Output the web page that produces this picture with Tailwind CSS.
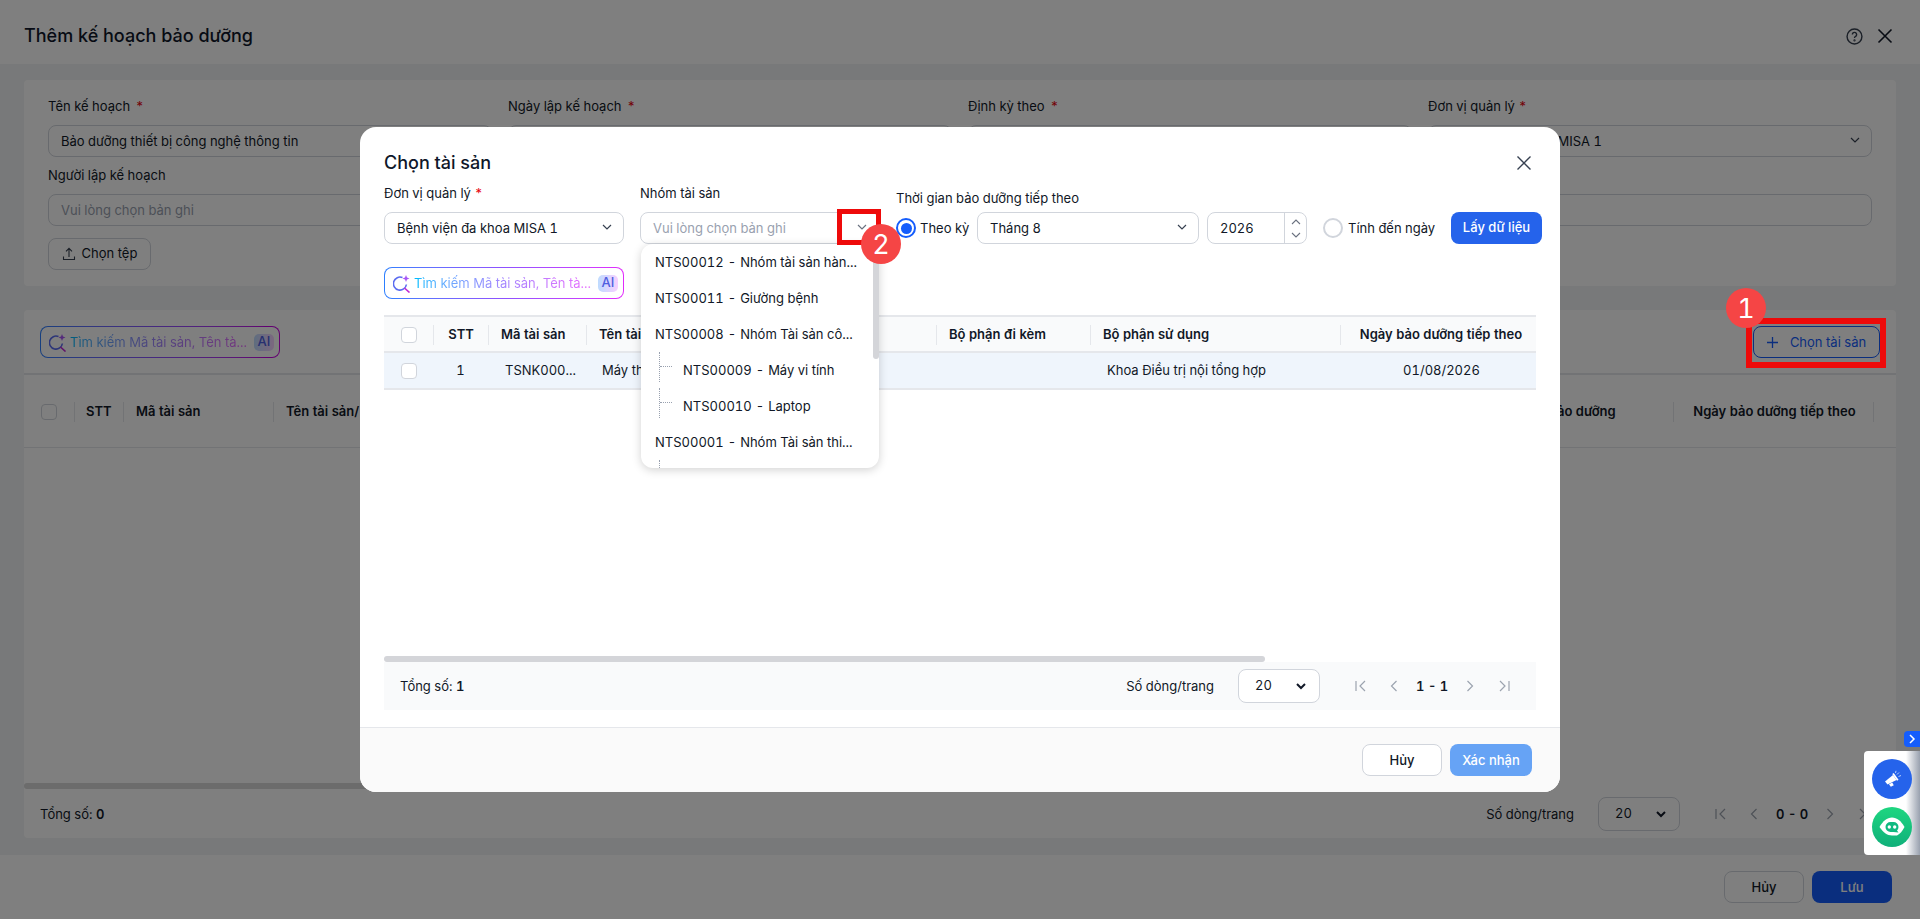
<!DOCTYPE html>
<html lang="vi">
<head>
    <meta charset="UTF-8">
    <meta name="viewport" content="width=device-width, initial-scale=1.0">
    <title>Thêm kế hoạch bảo dưỡng</title>
    <script src="https://cdn.jsdelivr.net/npm/@tailwindcss/browser@4"></script>
</head>
<body class="relative h-[919px] w-[1920px] overflow-hidden bg-[#f0f2f4] font-[Inter,sans-serif] text-[13px] tabular-nums text-[#111827]">

    <!-- page behind the dialog -->
    <div class="flex h-full flex-col">
        <header class="flex h-16 items-center justify-between bg-white pl-6 pr-[27px] pt-2">
            <h1 class="text-lg font-medium text-[#0f172a]">Thêm kế hoạch bảo dưỡng</h1>
            <div class="flex items-center gap-[14px]">
                <svg class="h-[17px] w-[17px]" viewBox="0 0 24 24" fill="none" stroke="#374151" stroke-width="2"><circle cx="12" cy="12" r="10.5"/><path d="M9 9.2a3 3 0 1 1 4.6 2.5c-1 .7-1.600 1.300-1.600 2.500"/><circle cx="12" cy="17.6" r=".6"/></svg>
                <svg class="h-4 w-4" viewBox="0 0 16 16" fill="none" stroke="#111827" stroke-width="1.6"><path d="M1.500 1.500l13 13M14.500 1.500l-13 13"/></svg>
            </div>
        </header>

        <main class="flex flex-1 flex-col gap-6 pb-[17px] pl-6 pr-6 pt-4">
            <section class="rounded bg-white px-6 pb-4 pt-[17px]">
                <div class="grid grid-cols-4 gap-x-4">
                    <div>
                        <label class="mb-2 block h-5 leading-[18px]">Tên kế hoạch <span class="ml-[2px] text-red-600">*</span></label>
                        <div class="flex h-8 items-center rounded-lg border border-gray-300 px-3 pt-[2px]">Bảo dưỡng thiết bị công nghệ thông tin</div>
                    </div>
                    <div>
                        <label class="mb-2 block h-5 leading-[18px]">Ngày lập kế hoạch <span class="ml-[2px] text-red-600">*</span></label>
                        <div class="flex h-8 items-center rounded-lg border border-gray-300 px-3"></div>
                    </div>
                    <div>
                        <label class="mb-2 block h-5 leading-[18px]">Định kỳ theo <span class="ml-[2px] text-red-600">*</span></label>
                        <div class="flex h-8 items-center rounded-lg border border-gray-300 px-3"></div>
                    </div>
                    <div>
                        <label class="mb-2 block h-5 leading-[18px]">Đơn vị quản lý <span class="text-red-600">*</span></label>
                        <div class="flex h-8 items-center justify-between rounded-lg border border-gray-300 pl-3 pr-[10px] pt-[2px]">
                            Bệnh viện đa khoa MISA 1
                            <svg class="-mt-1 h-3 w-3" viewBox="0 0 12 12" fill="none" stroke="#374151" stroke-width="1.2"><path d="M2 4l4 4 4-4"/></svg>
                        </div>
                    </div>
                </div>
                <div class="mt-[9px] grid grid-cols-4 gap-x-4">
                    <div>
                        <label class="mb-2 block h-5 leading-[18px]">Người lập kế hoạch</label>
                        <div class="flex h-8 items-center rounded-lg border border-gray-300 px-3 pt-[2px] text-gray-400">Vui lòng chọn bản ghi</div>
                    </div>
                    <div></div>
                    <div></div>
                    <div class="flex flex-col justify-end">
                        <div class="h-8 rounded-lg border border-gray-300"></div>
                    </div>
                </div>
                <button class="mt-3 flex h-8 w-[103px] items-center justify-center gap-[6px] rounded-lg border border-gray-300">
                    <svg class="h-[14px] w-[14px]" viewBox="0 0 14 14" fill="none" stroke="#374151" stroke-width="1.1"><path d="M7 10V1.500M4 4.300L7 1.300l3 3M1.500 9.500v3h11v-3"/></svg>
                    Chọn tệp
                </button>
            </section>

            <section class="flex flex-1 flex-col rounded bg-white">
                <div class="flex h-[65px] items-start justify-between border-b-2 border-gray-200 px-4 pt-4">
                    <div class="h-8 w-[240px] rounded-lg bg-gradient-to-r from-blue-500 via-violet-500 to-fuchsia-600 p-px">
                        <div class="flex h-full items-center rounded-[7px] bg-white pl-2 pr-[5px]">
                            <svg class="h-[19px] w-[19px] shrink-0" viewBox="0 0 19 19" fill="none" stroke-width="1.6"><path d="M9.500 3.600A6.500 6.500 0 1 0 13.400 10.500" stroke="#5b6cf0"/><path d="M11.500 14l5 4.500" stroke="#c026d3"/><path d="M13 1l1 2.500 2.500 1-2.500 1-1 2.500-1-2.500-2.500-1 2.500-1z" fill="#a855f7" stroke="none"/></svg>
                            <span class="ml-[2px] flex-1 truncate bg-gradient-to-r from-sky-400 via-violet-400 to-fuchsia-400 bg-clip-text pt-[2px] text-transparent">Tìm kiếm Mã tài sản, Tên tà...</span>
                            <span class="flex h-[17px] w-5 items-center justify-center rounded-[5px] bg-gradient-to-r from-blue-200 to-fuchsia-200 font-medium text-[#4f5fe0]">AI</span>
                        </div>
                    </div>
                    <button class="flex h-8 w-[127px] items-center justify-center gap-3 rounded-lg border border-blue-600 text-blue-600">
                        <svg class="h-[11px] w-[11px]" viewBox="0 0 11 11" fill="none" stroke="currentColor" stroke-width="1.3"><path d="M5.500 0v11M0 5.500h11"/></svg>
                        <span class="pt-[2px]">Chọn tài sản</span>
                    </button>
                </div>
                <div class="grid h-[73px] grid-cols-[50px_49px_150px_1fr_218px_200px_23px] items-center border-b border-gray-200 pt-[2px] font-semibold">
                    <div class="flex justify-end pr-[17px]"><span class="h-4 w-4 rounded border border-gray-300"></span></div>
                    <div class="flex h-5 items-center border-l border-gray-200 pl-[11px]">STT</div>
                    <div class="flex h-5 items-center border-l border-gray-200 pl-3">Mã tài sản</div>
                    <div class="flex h-5 items-center border-l border-gray-200 pl-3">Tên tài sản/</div>
                    <div class="flex h-5 items-center justify-center">Ngày bảo dưỡng</div>
                    <div class="flex h-5 items-center justify-center border-l border-gray-200 pl-[2px]">Ngày bảo dưỡng tiếp theo</div>
                    <div class="h-5 border-l border-gray-200"></div>
                </div>
                <div class="flex-1"></div>
                <div class="h-1.5 w-[1200px] rounded-full bg-[#d8d8d8]"></div>
                <div class="flex h-[49px] items-center justify-between pl-4">
                    <div class="pt-[2px]">Tổng số: <b class="font-semibold">0</b></div>
                    <div class="flex items-center">
                        <span class="pt-[2px]">Số dòng/trang</span>
                        <div class="ml-[24px] flex h-[34px] w-[82px] items-center justify-between rounded-lg border border-gray-300 pl-4 pr-3">
                            20
                            <svg class="h-3 w-3" viewBox="0 0 12 12" fill="none" stroke="#111827" stroke-width="2"><path d="M2 4l4 4 4-4"/></svg>
                        </div>
                        <svg class="ml-[33px] h-4 w-4" viewBox="0 0 16 16" fill="none" stroke="#9ca3af" stroke-width="1.2"><path d="M3 3v10M12 3L7 8l5 5"/></svg>
                        <svg class="ml-[17px] h-4 w-4" viewBox="0 0 16 16" fill="none" stroke="#9ca3af" stroke-width="1.2"><path d="M10.500 3L5.500 8l5 5"/></svg>
                        <span class="ml-[14px] w-[32px] whitespace-nowrap pt-[2px] text-center font-semibold">0 - 0</span>
                        <svg class="ml-[14px] h-4 w-4" viewBox="0 0 16 16" fill="none" stroke="#9ca3af" stroke-width="1.2"><path d="M5.500 3l5 5-5 5"/></svg>
                        <svg class="ml-[18px] mr-[24px] h-4 w-4" viewBox="0 0 16 16" fill="none" stroke="#9ca3af" stroke-width="1.2"><path d="M13 3v10M4 3l5 5-5 5"/></svg>
                    </div>
                </div>
            </section>
        </main>

        <footer class="flex h-16 items-start justify-end gap-2 bg-white pr-7 pt-4">
            <button class="h-8 w-20 rounded-lg border border-gray-300 pt-[2px] font-medium">Hủy</button>
            <button class="h-8 w-20 rounded-lg bg-blue-600 pt-[2px] font-medium text-white">Lưu</button>
        </footer>
    </div>

    <!-- overlay -->
    <div class="absolute inset-0 bg-black/50"></div>

    <!-- annotations on the page -->
    <div class="absolute left-[1746px] top-[318px] h-[50px] w-[140px] border-[6px] border-[#ee0a0a]"></div>
    <div class="absolute left-[1726px] top-[288px] flex h-10 w-10 items-center justify-center rounded-full bg-[#f54545] text-[27px] leading-none text-white">1</div>

    <!-- dialog -->
    <div class="absolute left-[360px] top-[127px] flex h-[665px] w-[1200px] flex-col overflow-hidden rounded-2xl bg-white">
        <div class="flex flex-1 flex-col px-6 pb-[17px] pt-6">
            <div class="flex h-6 items-center justify-between">
                <h2 class="text-lg font-medium leading-6 text-[#0f172a]">Chọn tài sản</h2>
                <svg class="mr-[4px] h-4 w-4" viewBox="0 0 16 16" fill="none" stroke="#374151" stroke-width="1.4"><path d="M1.500 1.500l13 13M14.500 1.500l-13 13"/></svg>
            </div>

            <div class="mt-2 flex items-end">
                <div class="w-[240px] shrink-0">
                    <label class="mb-[9px] block h-5 leading-5">Đơn vị quản lý <span class="text-red-600">*</span></label>
                    <div class="flex h-8 items-center justify-between rounded-lg border border-gray-300 pl-3 pr-[10px] pt-[2px]">
                        Bệnh viện đa khoa MISA 1
                        <svg class="-mt-1 h-3 w-3" viewBox="0 0 12 12" fill="none" stroke="#374151" stroke-width="1.2"><path d="M2 4l4 4 4-4"/></svg>
                    </div>
                </div>
                <div class="ml-4 w-[239px] shrink-0">
                    <label class="mb-[9px] block h-5 leading-5">Nhóm tài sản</label>
                    <div class="flex h-8 items-center justify-between rounded-lg border border-gray-300 pl-3 pr-[10px] pt-[2px] text-gray-400">
                        Vui lòng chọn bản ghi
                        <svg class="-mt-1 h-3 w-3" viewBox="0 0 12 12" fill="none" stroke="#6b7280" stroke-width="1.2"><path d="M2 4l4 4 4-4"/></svg>
                    </div>
                </div>
                <div class="ml-[17px] shrink-0">
                    <label class="mb-1 block h-5 leading-5">Thời gian bảo dưỡng tiếp theo</label>
                    <div class="flex h-8 items-center">
                        <span class="flex h-5 w-5 items-center justify-center rounded-full border-2 border-blue-600"><span class="h-[11px] w-[11px] rounded-full bg-blue-600"></span></span>
                        <span class="ml-[4px] w-[57px] pt-[2px]">Theo kỳ</span>
                        <div class="flex h-8 w-[222px] items-center justify-between rounded-lg border border-gray-300 pl-3 pr-[10px] pt-[2px]">
                            Tháng 8
                            <svg class="-mt-1 h-3 w-3" viewBox="0 0 12 12" fill="none" stroke="#374151" stroke-width="1.2"><path d="M2 4l4 4 4-4"/></svg>
                        </div>
                        <div class="ml-2 flex h-8 w-[100px] items-center justify-between rounded-lg border border-gray-300 pl-3">
                            <span class="pt-[2px]">2026</span>
                            <div class="flex h-[30px] w-[22px] flex-col items-center justify-center gap-[5px] border-l border-gray-300">
                                <svg class="h-2 w-3" viewBox="0 0 12 8" fill="none" stroke="#6b7280" stroke-width="1.1"><path d="M2 6l4-4 4 4"/></svg>
                                <svg class="h-2 w-3" viewBox="0 0 12 8" fill="none" stroke="#6b7280" stroke-width="1.1"><path d="M2 2l4 4 4-4"/></svg>
                            </div>
                        </div>
                        <span class="ml-4 h-5 w-5 rounded-full border-2 border-gray-300"></span>
                        <span class="ml-[5px] w-[103px] pt-[2px]">Tính đến ngày</span>
                        <button class="h-8 w-[91px] rounded-lg bg-[#2563eb] font-medium text-white">Lấy dữ liệu</button>
                    </div>
                </div>
            </div>

            <div class="mt-[23px] h-8 w-[240px] rounded-lg bg-gradient-to-r from-blue-500 via-violet-500 to-fuchsia-500 p-px">
                <div class="flex h-full items-center rounded-[7px] bg-white pl-2 pr-[5px]">
                    <svg class="h-[19px] w-[19px] shrink-0" viewBox="0 0 19 19" fill="none" stroke-width="1.6"><path d="M9.500 3.600A6.500 6.500 0 1 0 13.400 10.500" stroke="#5b6cf0"/><path d="M11.500 14l5 4.500" stroke="#c026d3"/><path d="M13 1l1 2.500 2.500 1-2.500 1-1 2.500-1-2.500-2.500-1 2.500-1z" fill="#a855f7" stroke="none"/></svg>
                    <span class="ml-[2px] flex-1 truncate bg-gradient-to-r from-sky-400 via-violet-400 to-fuchsia-400 bg-clip-text pt-[2px] text-transparent">Tìm kiếm Mã tài sản, Tên tà...</span>
                    <span class="flex h-[17px] w-5 items-center justify-center rounded-[5px] bg-gradient-to-r from-blue-200 to-fuchsia-200 font-medium text-[#4f5fe0]">AI</span>
                </div>
            </div>

            <div class="mt-4 grid h-[38px] grid-cols-[49px_55px_98px_350px_154px_250px_1fr] items-center border-y-2 border-gray-200 bg-gray-50 pt-px font-semibold">
                <div class="flex justify-end pr-4"><span class="h-4 w-4 rounded border border-gray-300 bg-white"></span></div>
                <div class="flex h-5 items-center justify-center border-l border-gray-200">STT</div>
                <div class="flex h-5 items-center border-l border-gray-200 pl-3">Mã tài sản</div>
                <div class="flex h-5 items-center border-l border-gray-200 pl-3">Tên tài sản</div>
                <div class="flex h-5 items-center border-l border-gray-200 pl-3">Bộ phận đi kèm</div>
                <div class="flex h-5 items-center border-l border-gray-200 pl-3">Bộ phận sử dụng</div>
                <div class="flex h-5 items-center justify-center border-l border-gray-200 pl-[5px]">Ngày bảo dưỡng tiếp theo</div>
            </div>
            <div class="grid h-[37px] grid-cols-[49px_55px_98px_350px_154px_250px_1fr] items-center border-b-2 border-gray-200 bg-[#eff5fc]">
                <div class="flex justify-end pr-4"><span class="h-4 w-4 rounded border border-gray-300 bg-white"></span></div>
                <div class="text-center">1</div>
                <div class="pl-[17px]">TSNK000...</div>
                <div class="pl-4">Máy thở</div>
                <div></div>
                <div class="pl-[17px]">Khoa Điều trị nội tổng hợp</div>
                <div class="pl-[7px] text-center">01/08/2026</div>
            </div>

            <div class="flex-1"></div>
            <div class="h-1.5 w-[881px] rounded-full bg-[#d4d5d9]"></div>
            <div class="flex h-12 items-center justify-between bg-gray-50 pl-4">
                <div class="pt-[2px]">Tổng số: <b class="font-semibold">1</b></div>
                <div class="flex items-center">
                    <span class="pt-[2px]">Số dòng/trang</span>
                    <div class="ml-[24px] flex h-[34px] w-[82px] items-center justify-between rounded-lg border border-gray-300 bg-white pl-4 pr-3">
                        20
                        <svg class="h-3 w-3" viewBox="0 0 12 12" fill="none" stroke="#111827" stroke-width="2"><path d="M2 4l4 4 4-4"/></svg>
                    </div>
                    <svg class="ml-[33px] h-4 w-4" viewBox="0 0 16 16" fill="none" stroke="#9ca3af" stroke-width="1.2"><path d="M3 3v10M12 3L7 8l5 5"/></svg>
                    <svg class="ml-[17px] h-4 w-4" viewBox="0 0 16 16" fill="none" stroke="#9ca3af" stroke-width="1.2"><path d="M10.500 3L5.500 8l5 5"/></svg>
                    <span class="ml-[14px] w-[32px] whitespace-nowrap pt-[2px] text-center font-semibold">1 - 1</span>
                    <svg class="ml-[14px] h-4 w-4" viewBox="0 0 16 16" fill="none" stroke="#9ca3af" stroke-width="1.2"><path d="M5.500 3l5 5-5 5"/></svg>
                    <svg class="ml-[18px] mr-[24px] h-4 w-4" viewBox="0 0 16 16" fill="none" stroke="#9ca3af" stroke-width="1.2"><path d="M13 3v10M4 3l5 5-5 5"/></svg>
                </div>
            </div>
        </div>

        <div class="flex h-[65px] items-start justify-end gap-2 border-t border-gray-200 bg-[#fafafa] pr-[28px] pt-4">
            <button class="h-8 w-20 rounded-lg border border-gray-300 bg-white pt-[2px] font-medium">Hủy</button>
            <button class="h-8 w-[82px] rounded-lg bg-[#66a3f5] pt-[2px] font-medium text-white">Xác nhận</button>
        </div>
    </div>

    <!-- group dropdown -->
    <div class="absolute left-[641px] top-[244px] h-[224px] w-[238px] overflow-hidden rounded-xl bg-white shadow-[0_2px_10px_rgba(0,0,0,0.18)]">
        <div class="flex h-9 items-center whitespace-nowrap pl-[14px] pt-[2px]">NTS00012<span class="mx-1">-</span>Nhóm tài sản hàn...</div>
        <div class="flex h-9 items-center whitespace-nowrap pl-[14px] pt-[2px]">NTS00011<span class="mx-1">-</span>Giường bệnh</div>
        <div class="flex h-9 items-center whitespace-nowrap pl-[14px] pt-[2px]">NTS00008<span class="mx-1">-</span>Nhóm Tài sản cô...</div>
        <div class="flex h-9 items-center whitespace-nowrap pl-[42px] pt-[2px]">NTS00009<span class="mx-1">-</span>Máy vi tính</div>
        <div class="flex h-9 items-center whitespace-nowrap pl-[42px] pt-[2px]">NTS00010<span class="mx-1">-</span>Laptop</div>
        <div class="flex h-9 items-center whitespace-nowrap pl-[14px] pt-[2px]">NTS00001<span class="mx-1">-</span>Nhóm Tài sản thi...</div>
        <!-- tree guides -->
        <div class="absolute left-[18px] top-[108px] h-[30px] w-3 border-l border-dotted border-gray-400"><div class="mt-[14px] w-3 border-t border-dotted border-gray-400"></div></div>
        <div class="absolute left-[18px] top-[144px] h-[30px] w-3 border-l border-dotted border-gray-400"><div class="mt-[14px] w-3 border-t border-dotted border-gray-400"></div></div>
        <div class="absolute left-[18px] top-[216px] h-2 border-l border-dotted border-gray-400"></div>
        <div class="absolute right-0 top-4 h-[99px] w-[6px] rounded-full bg-[#d4d5d9]"></div>
    </div>

    <!-- annotation 2 -->
    <div class="absolute left-[837px] top-[209px] h-[36px] w-[44px] border-[5px] border-[#ee0a0a]"></div>
    <div class="absolute left-[861px] top-[224px] flex h-10 w-10 items-center justify-center rounded-full bg-[#f54545] text-[27px] leading-none text-white">2</div>

    <!-- floating widget -->
    <div class="absolute left-[1904px] top-[731px] flex h-4 w-4 items-center justify-center rounded-l-sm bg-blue-600">
        <svg class="h-[10px] w-[10px]" viewBox="0 0 10 10" fill="none" stroke="#fff" stroke-width="1.5"><path d="M3 1l4 4-4 4"/></svg>
    </div>
    <div class="absolute left-[1864px] top-[751px] flex h-[104px] w-14 flex-col items-center gap-2 rounded-l bg-gradient-to-r from-white from-75% to-gray-400 py-2">
        <div class="flex h-10 w-10 items-center justify-center rounded-full bg-[#2563eb]">
            <svg class="h-5 w-5" viewBox="0 0 20 20" fill="#fff"><path d="M3 12.500L11 6l3.500 5-9 4.500z"/><path d="M11 4.500l4.800 6.800" stroke="#fff" stroke-width="1.800"/><path d="M7 15.200l3.200-1.600 1.600 2.600-3 1.600z"/><path d="M15 5.500l2-2M16.500 7.500l2.500-1M13.500 4l.5-2.200" stroke="#fff" stroke-width=".7"/></svg>
        </div>
        <div class="flex h-10 w-10 items-center justify-center rounded-full bg-gradient-to-b from-[#1ed680] to-[#10b07a]">
            <svg class="h-7 w-7" viewBox="0 0 28 28"><path d="M1.500 14C5 8 9 4.500 14 4.500S23 8 26.500 14c-2 4-4.500 7-7.500 8.500H14C9 22.500 5 19 1.500 14z" fill="#fff"/><path d="M12.500 9h3a5 5 0 0 1 5 5 5 5 0 0 1-1.500 3.500l1.500 2-5-.5h-3a5 5 0 0 1 0-10z" fill="#10b981"/><circle cx="11.300" cy="14" r="1.700" fill="#fff"/><circle cx="16.700" cy="14" r="1.700" fill="#fff"/></svg>
        </div>
    </div>
</body>
</html>
